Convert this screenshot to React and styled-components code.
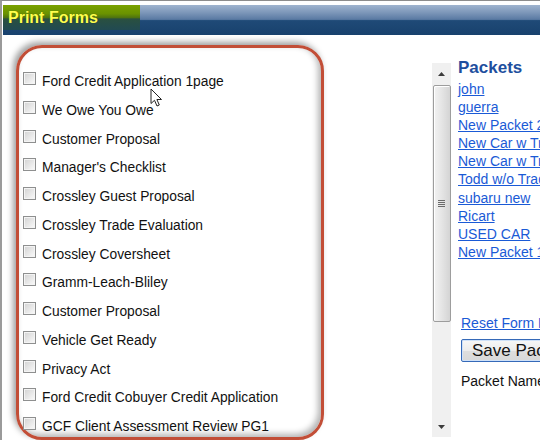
import React from 'react';
import styled, { createGlobalStyle } from 'styled-components';

const GlobalStyle = createGlobalStyle`
  html, body {
    margin: 0;
    padding: 0;
    background: #ffffff;
    overflow: hidden;
  }
  body {
    font-family: Arial, "Liberation Sans", sans-serif;
  }
`;

const forms = [
  'Ford Credit Application 1page',
  'We Owe You Owe',
  'Customer Proposal',
  "Manager's Checklist",
  'Crossley Guest Proposal',
  'Crossley Trade Evaluation',
  'Crossley Coversheet',
  'Gramm-Leach-Bliley',
  'Customer Proposal',
  'Vehicle Get Ready',
  'Privacy Act',
  'Ford Credit Cobuyer Credit Application',
  'GCF Client Assessment Review PG1',
];

const packets = [
  'john',
  'guerra',
  'New Packet 2',
  'New Car w Trade',
  'New Car w Trade 2',
  'Todd w/o Trade',
  'subaru new',
  'Ricart',
  'USED CAR',
  'New Packet 1',
];

const Page = styled.div`
  position: relative;
  width: 540px;
  height: 440px;
  overflow: hidden;
  border-top: 1px solid #8d8d8d;
  border-left: 2px solid #9a9a9a;
  box-sizing: border-box;
`;

const Header = styled.div`
  margin: 4px 0 0 1px;
  height: 30px;
  display: flex;
  background: linear-gradient(
    to bottom,
    #9fb4cf 0%,
    #7d97b9 25%,
    #5a7aa3 48%,
    #1f4a77 52%,
    #18416d 100%
  );
`;

const Tab = styled.div`
  width: 137px;
  height: 25px;
  padding-left: 5px;
  box-sizing: border-box;
  display: flex;
  align-items: center;
  background: linear-gradient(
    to bottom,
    #7ba200 0%,
    #6a9200 35%,
    #4f7410 50%,
    #2a5040 56%,
    #214a52 100%
  );
  color: #ffff4d;
  font-weight: bold;
  font-size: 16px;
  text-shadow: 0 0 1px rgba(0, 0, 0, 0.4);
`;

const Main = styled.div`
  display: flex;
  align-items: flex-start;
  padding: 10px 0 0 14px;
`;

const FormsBox = styled.div`
  width: 308px;
  height: 395px;
  box-sizing: border-box;
  border: 3px solid #c24e37;
  border-radius: 26px;
  padding: 24px 0 0 4px;
  box-shadow: -3px -3px 6px rgba(0, 0, 0, 0.38),
    inset -3px -3px 6px rgba(0, 0, 0, 0.3);
  flex-shrink: 0;
`;

const FormRow = styled.div`
  display: flex;
  align-items: flex-start;
  height: 28.75px;
`;

const Check = styled.span`
  width: 13px;
  height: 13px;
  box-sizing: border-box;
  border: 1px solid #8e8f8f;
  background: linear-gradient(135deg, #d2d2d2 0%, #e8e8e8 55%, #fbfbfb 100%);
  box-shadow: inset 0 0 0 1px #f4f4f4;
  margin-right: 6px;
  flex-shrink: 0;
`;

const FormLabel = styled.span`
  font-size: 13.8px;
  line-height: 16px;
  margin-top: 2px;
  color: #111;
  white-space: nowrap;
`;

const ScrollBar = styled.div`
  width: 19px;
  height: 374px;
  margin: 18px 0 0 108px;
  background: #f0f0f0;
  display: flex;
  flex-direction: column;
  align-items: center;
  flex-shrink: 0;
`;

const ArrowButton = styled.div`
  height: ${(p) => p.h}px;
  width: 100%;
  display: flex;
  align-items: center;
  justify-content: center;
`;

const Thumb = styled.div`
  width: 18px;
  height: 237px;
  box-sizing: border-box;
  border: 1px solid #9d9d9d;
  border-radius: 2px;
  background: linear-gradient(to right, #f2f2f2 0%, #e6e6e6 45%, #d4d4d4 100%);
  box-shadow: inset 1px 1px 0 #ffffff;
  display: flex;
  align-items: center;
  justify-content: center;
`;

const Grip = styled.div`
  width: 7px;
  display: flex;
  flex-direction: column;
  gap: 1px;
  span {
    height: 1px;
    background: #6a6a6a;
  }
`;

const Track = styled.div`
  flex: 1;
`;

const Side = styled.div`
  margin: 13px 0 0 7px;
  display: flex;
  flex-direction: column;
  white-space: nowrap;
`;

const SideTitle = styled.div`
  font-size: 17px;
  line-height: 20px;
  font-weight: bold;
  color: #1e4f9e;
  margin-bottom: 2px;
`;

const PacketLink = styled.a`
  font-size: 14px;
  line-height: 18.1px;
  color: #1a5ad6;
  text-decoration: underline;
  cursor: pointer;
`;

const Actions = styled.div`
  margin: 53px 0 0 3px;
  display: flex;
  flex-direction: column;
  align-items: flex-start;
`;

const SaveButton = styled.button`
  margin-top: 7px;
  height: 23px;
  width: 120px;
  padding: 0 0 0 10px;
  text-align: left;
  font-family: Arial, "Liberation Sans", sans-serif;
  font-size: 17px;
  color: #111;
  border: 1px solid #3569b8;
  border-radius: 2px;
  background: linear-gradient(to bottom, #f7f7f7 0%, #ececec 50%, #dedede 51%, #d8d8d8 100%);
  box-shadow: inset 0 0 0 1px #cfe1f8;
  white-space: nowrap;
`;

const FieldLabel = styled.div`
  margin-top: 10px;
  font-size: 14px;
  line-height: 18px;
  color: #111;
`;

const Pointer = styled.svg`
  position: absolute;
  left: 148px;
  top: 87px;
  pointer-events: none;
`;

const UpArrow = () => (
  <svg width="7" height="4" viewBox="0 0 7 4">
    <path d="M0 4 L3.5 0 L7 4 Z" fill="#3c3c3c" />
  </svg>
);

const DownArrow = () => (
  <svg width="7" height="4" viewBox="0 0 7 4">
    <path d="M0 0 L3.5 4 L7 0 Z" fill="#3c3c3c" />
  </svg>
);

export default function App() {
  return (
    <>
      <GlobalStyle />
      <Page>
        <Header>
          <Tab>Print Forms</Tab>
        </Header>
        <Main>
          <FormsBox>
            {forms.map((f, i) => (
              <FormRow key={i}>
                <Check />
                <FormLabel>{f}</FormLabel>
              </FormRow>
            ))}
          </FormsBox>
          <ScrollBar>
            <ArrowButton h={22}>
              <UpArrow />
            </ArrowButton>
            <Thumb>
              <Grip>
                <span />
                <span />
                <span />
                <span />
              </Grip>
            </Thumb>
            <Track />
            <ArrowButton h={20}>
              <DownArrow />
            </ArrowButton>
          </ScrollBar>
          <Side>
            <SideTitle>Packets</SideTitle>
            {packets.map((p) => (
              <PacketLink key={p}>{p}</PacketLink>
            ))}
            <Actions>
              <PacketLink>Reset Form Links</PacketLink>
              <SaveButton>Save Packet</SaveButton>
              <FieldLabel>Packet Name</FieldLabel>
            </Actions>
          </Side>
        </Main>
        <Pointer width="13" height="20" viewBox="0 0 13 20">
          <path
            d="M1 1 L1 15.5 L4.5 12.3 L7 18 L9.3 17 L6.9 11.5 L11.5 11.5 Z"
            fill="#ffffff"
            stroke="#222"
            strokeWidth="1"
            strokeLinejoin="round"
          />
        </Pointer>
      </Page>
    </>
  );
}
